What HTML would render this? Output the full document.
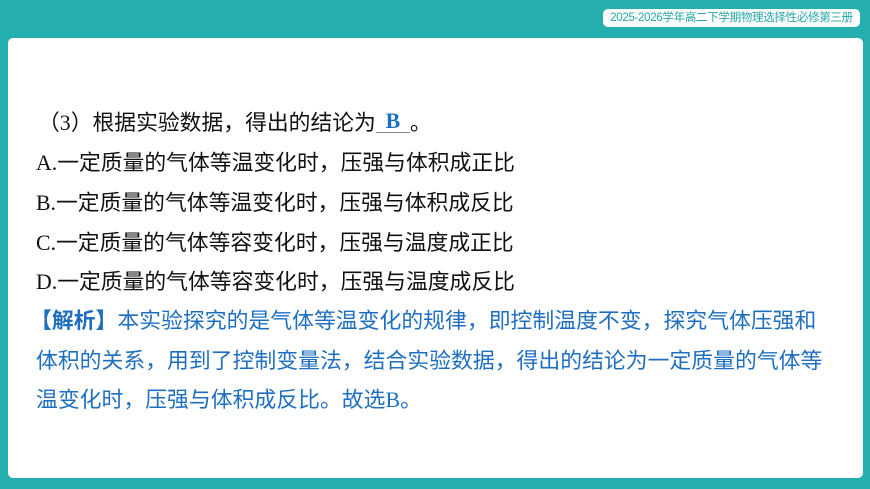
<!DOCTYPE html>
<html><head><meta charset="utf-8"><style>
html,body{margin:0;padding:0}
body{width:870px;height:489px;background:#24aeae;position:relative;overflow:hidden;font-family:"Liberation Serif","Noto Sans CJK SC",sans-serif}
.panel{position:absolute;left:8px;top:38px;width:855px;height:440px;background:#fff;border-radius:5px}
.pill{position:absolute;left:603px;top:9px;width:257px;height:18px;background:#fff;border-radius:5px;color:#24a6a6;font-size:11.5px;line-height:18px;text-align:center;font-family:"Liberation Sans","Noto Sans CJK SC",sans-serif;letter-spacing:-0.3px}
.l{position:absolute;left:36px;font-size:21.8px;line-height:26px;color:#111;white-space:nowrap;font-family:"Liberation Serif","Noto Sans CJK SC",sans-serif}
.b{color:#1f6fc0;font-size:21.85px}
.ans{display:inline-block;width:34px;border-bottom:1px solid #888;text-align:center;color:#1f6fc0;font-weight:bold;line-height:22px;vertical-align:2px}
</style></head><body>
<div class="pill">2025-2026学年高二下学期物理选择性必修第三册</div>
<div class="panel"></div>
<div class="l" style="top:110px;left:38px">（3）根据实验数据，得出的结论为<span class="ans">B</span>。</div>
<div class="l" style="top:150px">A.一定质量的气体等温变化时，压强与体积成正比</div>
<div class="l" style="top:190px">B.一定质量的气体等温变化时，压强与体积成反比</div>
<div class="l" style="top:230px">C.一定质量的气体等容变化时，压强与温度成正比</div>
<div class="l" style="top:269px">D.一定质量的气体等容变化时，压强与温度成反比</div>
<div class="l b" style="top:308px;left:30px"><b>【解析】</b>本实验探究的是气体等温变化的规律，即控制温度不变，探究气体压强和</div>
<div class="l b" style="top:348px">体积的关系，用到了控制变量法，结合实验数据，得出的结论为一定质量的气体等</div>
<div class="l b" style="top:387px">温变化时，压强与体积成反比。故选B。</div>
</body></html>
